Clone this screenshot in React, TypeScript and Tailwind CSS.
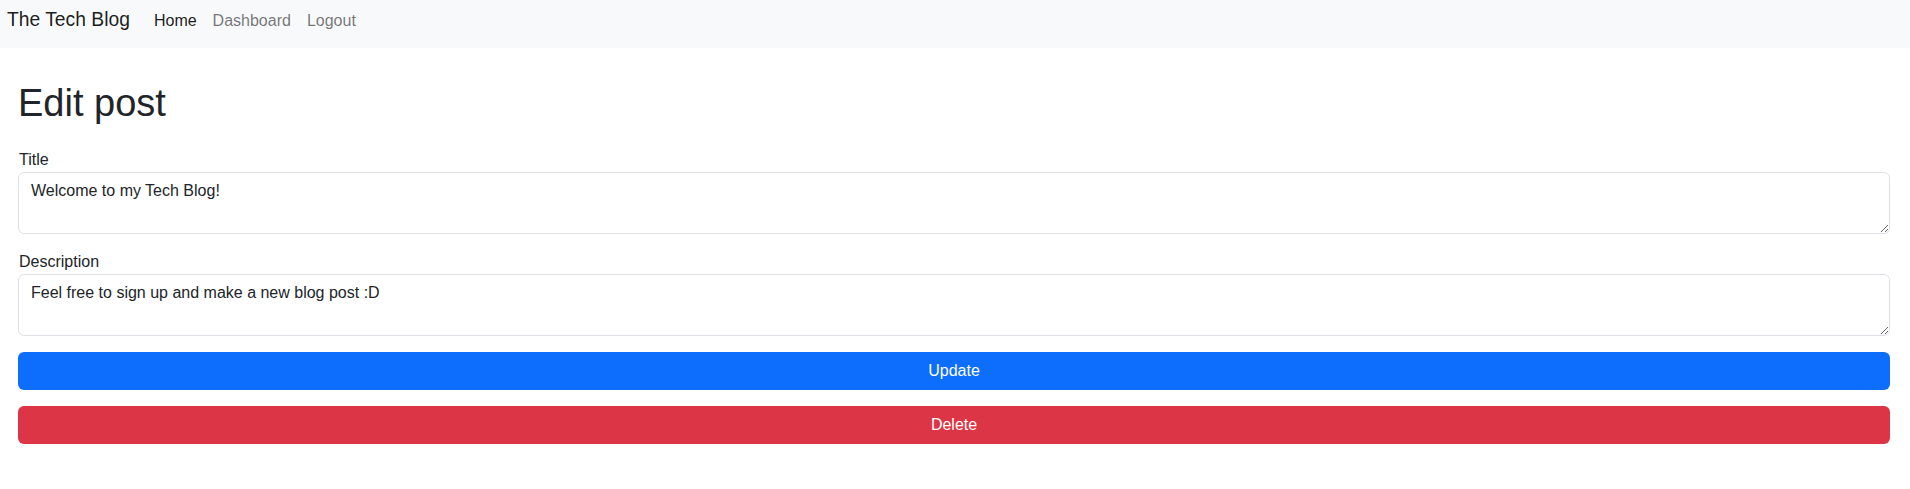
import React from "react";

export default function App() {
  return (
    <div className="min-h-screen bg-white text-[#212529]" style={{ fontFamily: '"Liberation Sans", Arial, Helvetica, sans-serif' }}>
      <nav className="h-[48px] bg-[#f8f9fa] flex items-baseline pt-[8px] pl-[7px]">
        <a className="text-[19.3px] leading-[24px] text-black/90 mr-[16px]" href="#">The Tech Blog</a>
        <div className="flex items-baseline text-[16px] leading-[24px]">
          <a className="px-[8px] text-black/90" href="#">Home</a>
          <a className="px-[8px] text-black/55" href="#">Dashboard</a>
          <a className="px-[8px] text-black/55" href="#">Logout</a>
        </div>
      </nav>
      <main className="pl-[18px] pr-[20px]">
        <h1 className="mt-[33px] text-[38px] leading-[1.2] font-normal">Edit post</h1>
        <form className="mt-[21px] flex flex-col" onSubmit={(e) => e.preventDefault()}>
          <label className="text-[16px] leading-[24px] pl-[1px]" htmlFor="title">Title</label>
          <textarea
            id="title"
            rows={2}
            defaultValue="Welcome to my Tech Blog!"
            className="block w-full h-[62px] border border-[#dee2e6] rounded-[6px] px-[12px] py-[6px] text-[16px] leading-[24px] text-[#212529] outline-none"
          />
          <label className="mt-[16px] text-[16px] leading-[24px] pl-[1px]" htmlFor="desc">Description</label>
          <textarea
            id="desc"
            rows={2}
            defaultValue="Feel free to sign up and make a new blog post :D"
            className="block w-full h-[62px] border border-[#dee2e6] rounded-[6px] px-[12px] py-[6px] text-[16px] leading-[24px] text-[#212529] outline-none"
          />
          <button type="submit" className="mt-[16px] h-[38px] w-full rounded-[6px] bg-[#0d6efd] text-white text-[16px] leading-[24px]">Update</button>
          <button type="button" className="mt-[16px] h-[38px] w-full rounded-[6px] bg-[#dc3545] text-white text-[16px] leading-[24px]">Delete</button>
        </form>
      </main>
    </div>
  );
}
